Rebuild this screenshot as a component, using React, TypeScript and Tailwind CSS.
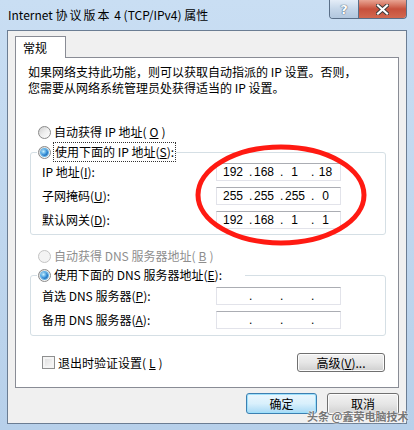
import clsx from 'clsx'
import type { ReactNode } from 'react'

const font = "font-['SimSun','Noto_Sans_CJK_SC',sans-serif]"

function Radio({ checked, disabled }: { checked?: boolean; disabled?: boolean }) {
  return (
    <span
      className={clsx(
        'inline-flex h-[13px] w-[13px] shrink-0 items-center justify-center rounded-full border',
        disabled
          ? 'border-[#c4c4c4] bg-[#f3f3f3]'
          : 'border-[#8a8a8a] bg-linear-to-br from-[#cfcfcf] via-[#eeeeee] to-[#ffffff]'
      )}
    >
      {checked && (
        <span className="h-[7px] w-[7px] rounded-full bg-[radial-gradient(circle_at_35%_35%,#c7f3ff,#2f8ad6_55%,#0b4686)] ring-1 ring-[#5fb3e8]" />
      )}
    </span>
  )
}

function Key({ k }: { k: string }) {
  return (
    <>
      (<u>{k}</u>)
    </>
  )
}

function IpField({ parts }: { parts: string[] }) {
  return (
    <div className="flex h-[18px] w-[125px] items-center border border-[#e2e3ea] border-t-[#abadb3] bg-white pl-[6px] font-['Liberation_Sans',sans-serif] text-[12px] leading-none">
      {parts.map((p, i) => (
        <div key={i} className="flex items-center">
          {i > 0 && <span className="w-[12px] pl-[7px]">.</span>}
          <span className="w-[19px] text-center">{p}</span>
        </div>
      ))}
    </div>
  )
}

function Row({ label, children }: { label: ReactNode; children: ReactNode }) {
  return (
    <div className="flex h-[18px] items-center">
      <span className="w-[174px]">{label}</span>
      {children}
    </div>
  )
}

function GroupBox({ legend, className, children }: { legend: ReactNode; className?: string; children: ReactNode }) {
  return (
    <div className={clsx('ml-[2px] rounded-[3px] border border-[#d5dfe5] pl-[11px]', className)}>
      <div className="-mt-[9px] -ml-[5px] flex h-[16px] w-fit items-center gap-[3px] bg-white px-px">
        {legend}
      </div>
      {children}
    </div>
  )
}

function Button({ children, primary, className }: { children: ReactNode; primary?: boolean; className?: string }) {
  return (
    <button
      className={clsx(
        'flex items-center justify-center rounded-[3px] border text-[12px] leading-none text-black',
        primary
          ? 'border-[#3c7fb1] bg-linear-to-b from-[#eaf6fd] via-[#d9f0fc] to-[#a7d9f5] shadow-[inset_0_0_0_1px_#9ee0fb]'
          : 'border-[#707070] bg-linear-to-b from-[#f2f2f2] via-[#e6e6e6] to-[#cfcfcf] shadow-[inset_0_0_0_1px_#fcfcfc]',
        className
      )}
    >
      {children}
    </button>
  )
}

export default function App() {
  const empty = ['', '', '', '']

  return (
    <div className={clsx('relative h-[430px] w-[414px] overflow-hidden bg-linear-to-b from-[#c9def3] to-[#b7d0ea] text-[12px] text-black', font)}>
      {/* title bar */}
      <div className="flex h-[30px] items-start pl-[8px] pr-[7px]">
        <span className="mt-[7px] font-['Noto_Sans_CJK_SC',sans-serif] text-[12px] leading-[16px]">
          Internet <span className="tracking-[2px]">协议版本</span> 4 (TCP/IPv4) 属性
        </span>
        <div className="ml-auto flex h-[19px] overflow-hidden rounded-b-[4px] border border-t-0 border-[#5a6f88]">
          <div className="flex w-[29px] items-center justify-center border-r border-[#5a6f88] bg-linear-to-b from-[#e4edf7] via-[#c5d6e9] to-[#b2c7de] font-['DejaVu_Sans',sans-serif] text-[13px] font-bold leading-none text-white [text-shadow:0_0_1px_#394e66,0_0_1px_#394e66]">
            ?
          </div>
          <div className="flex w-[47px] items-center justify-center bg-linear-to-b from-[#e8a493] via-[#c7503c] to-[#d2674f]">
            <svg width="13" height="11" viewBox="0 0 13 11">
              <path d="M2 1.5 L11 9.5 M11 1.5 L2 9.5" stroke="#3a3a3a" strokeWidth="4" strokeLinecap="square" />
              <path d="M2 1.5 L11 9.5 M11 1.5 L2 9.5" stroke="#ffffff" strokeWidth="2.2" strokeLinecap="square" />
            </svg>
          </div>
        </div>
      </div>

      {/* client area */}
      <div className="mx-[7px] h-[394px] border border-[#6b7d93] bg-[#f0f0f0] px-[7px] pt-[5px]">
        <div className="relative z-10 -mb-px flex h-[22px] w-[51px] items-center border border-b-0 border-[#898c95] bg-white pl-[7px]">
          常规
        </div>
        <div className="flex h-[331px] flex-col border border-[#898c95] bg-white px-[12px]">
          <p className="mt-[6px] leading-[16px]">
            如果网络支持此功能，则可以获取自动指派的 IP 设置。否则，
            <br />
            您需要从网络系统管理员处获得适当的 IP 设置。
          </p>

          <label className="mt-[28px] ml-[10px] flex h-[16px] items-center gap-[3px]">
            <Radio />
            自动获得 IP 地址<Key k="O" />
          </label>

          <GroupBox
            className="mt-[12px] pb-[5px]"
            legend={
              <>
                <Radio checked />
                <span className="px-px outline-1 outline-dotted outline-[#333]">
                  使用下面的 IP 地址<Key k="S" />:
                </span>
              </>
            }
          >
            <div className="mt-[3px] flex flex-col gap-[6px]">
              <Row label={<>IP 地址<Key k="I" />:</>}>
                <IpField parts={['192', '168', '1', '18']} />
              </Row>
              <Row label={<>子网掩码<Key k="U" />:</>}>
                <IpField parts={['255', '255', '255', '0']} />
              </Row>
              <Row label={<>默认网关<Key k="D" />:</>}>
                <IpField parts={['192', '168', '1', '1']} />
              </Row>
            </div>
          </GroupBox>

          <label className="mt-[13px] ml-[10px] flex h-[16px] items-center gap-[3px] text-[#8e8e8e]">
            <Radio disabled />
            自动获得 DNS 服务器地址<Key k="B" />
          </label>

          <GroupBox
            className="mt-[11px] pb-[6px]"
            legend={
              <>
                <Radio checked />
                <span className="pr-[22px]">
                  使用下面的 DNS 服务器地址<Key k="E" />:
                </span>
              </>
            }
          >
            <div className="mt-[4px] flex flex-col gap-[6px]">
              <Row label={<>首选 DNS 服务器<Key k="P" />:</>}>
                <IpField parts={empty} />
              </Row>
              <Row label={<>备用 DNS 服务器<Key k="A" />:</>}>
                <IpField parts={empty} />
              </Row>
            </div>
          </GroupBox>

          <div className="mt-[17px] flex items-center">
            <label className="ml-[14px] flex items-center gap-[3px]">
              <span className="h-[13px] w-[13px] border border-[#8e8f8f] bg-linear-to-br from-[#dcdcdc] to-[#fbfbfb] shadow-[inset_0_0_0_2px_#f4f4f4]" />
              退出时验证设置<Key k="L" />
            </label>
            <Button className="mr-px ml-auto h-[19px] w-[88px]">
              高级<Key k="V" />...
            </Button>
          </div>
        </div>

        <div className="mt-[5px] flex justify-end gap-[10px]">
          <Button primary className="h-[21px] w-[71px]">
            确定
          </Button>
          <Button className="h-[22px] w-[72px]">取消</Button>
        </div>
      </div>

      {/* red marker drawn over the screenshot */}
      <svg className="pointer-events-none absolute top-0 left-0" width="414" height="430">
        <ellipse cx="281" cy="195" rx="83" ry="48" fill="none" stroke="#ff1a12" strokeWidth="5" />
      </svg>

      <span className="absolute top-[410px] left-[307px] font-['Noto_Sans_CJK_SC',sans-serif] text-[11px] leading-[13px] font-bold text-[#777] [text-shadow:0_0_2px_#fff,0_0_2px_#fff]">
        头条 @鑫荣电脑技术
      </span>
    </div>
  )
}
